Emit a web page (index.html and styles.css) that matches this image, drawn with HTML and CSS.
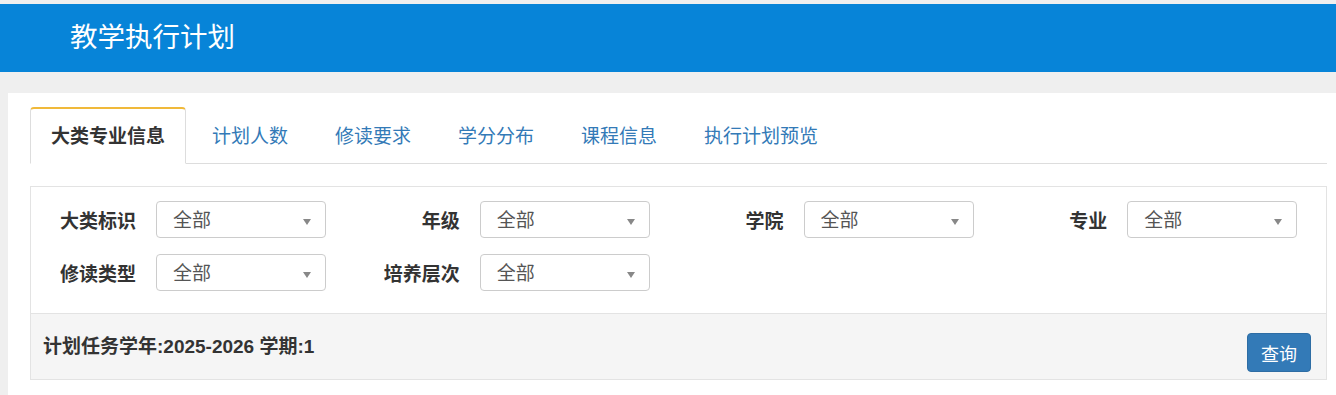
FILE: index.html
```html
<!DOCTYPE html>
<html lang="zh-CN">
<head>
    <meta charset="UTF-8">
    <meta name="viewport" content="width=device-width, initial-scale=1.0">
    <title>教学执行计划</title>
    <link rel="stylesheet" href="styles.css">
</head>
<body>
    <header class="topbar">教学执行计划</header>

    <main class="page">
        <ul class="tabs">
            <li class="tab active">大类专业信息</li>
            <li class="tab">计划人数</li>
            <li class="tab">修读要求</li>
            <li class="tab">学分分布</li>
            <li class="tab">课程信息</li>
            <li class="tab">执行计划预览</li>
        </ul>

        <section class="panel">
            <div class="filters">
                <div class="field">
                    <label>大类标识</label>
                    <div class="select"><span>全部</span><i class="caret"></i></div>
                </div>
                <div class="field">
                    <label>年级</label>
                    <div class="select"><span>全部</span><i class="caret"></i></div>
                </div>
                <div class="field">
                    <label>学院</label>
                    <div class="select"><span>全部</span><i class="caret"></i></div>
                </div>
                <div class="field">
                    <label>专业</label>
                    <div class="select"><span>全部</span><i class="caret"></i></div>
                </div>
                <div class="field">
                    <label>修读类型</label>
                    <div class="select"><span>全部</span><i class="caret"></i></div>
                </div>
                <div class="field">
                    <label>培养层次</label>
                    <div class="select"><span>全部</span><i class="caret"></i></div>
                </div>
            </div>
            <div class="panel-footer">
                <span class="term">计划任务学年:2025-2026 学期:1</span>
                <button class="btn">查询</button>
            </div>
        </section>
    </main>
</body>
</html>
```

FILE: styles.css
```css
/* Base */
* {
    margin: 0;
    padding: 0;
    box-sizing: border-box;
}

body {
    font-family: "Liberation Sans", "Noto Sans CJK SC", sans-serif;
    background: #efefef;
    color: #333;
    height: 395px;
    overflow: hidden;
}

/* Header bar */
.topbar {
    margin-top: 4px;
    height: 68px;
    line-height: 68px;
    padding-left: 70px;
    background: #0784d8;
    color: #fff;
    font-size: 27.5px;
}

/* Page body */
.page {
    margin: 21px 0 0 8px;
    padding: 14px 9px 0 22px;
    background: #fff;
    height: 310px;
}

/* Tabs */
.tabs {
    display: flex;
    list-style: none;
    border-bottom: 1px solid #ddd;
}

.tab {
    padding: 0 20px;
    margin-right: 5px;
    height: 57px;
    line-height: 58px;
    font-size: 19px;
    color: #337ab7;
    border: 1px solid transparent;
    border-radius: 4px 4px 0 0;
    margin-bottom: -1px;
}

.tab.active {
    color: #333;
    font-weight: bold;
    background: #fff;
    border-color: #ddd;
    border-top: 2px solid #f0b93a;
    border-bottom-color: #fff;
    line-height: 56px;
}

/* Filter panel */
.panel {
    margin-top: 22px;
    border: 1px solid #e3e3e3;
}

.filters {
    display: grid;
    grid-template-columns: repeat(4, 1fr);
    row-gap: 16px;
    padding: 14px 0 22px;
}

.field {
    display: flex;
    align-items: center;
}

.field label {
    width: 105px;
    margin-right: 20px;
    text-align: right;
    font-size: 19px;
    font-weight: bold;
    color: #333;
}

.select {
    position: relative;
    width: 170px;
    height: 37px;
    line-height: 38px;
    padding-left: 16px;
    border: 1px solid #ccc;
    border-radius: 4px;
    font-size: 19px;
    color: #555;
}

.caret {
    position: absolute;
    right: 14px;
    top: 17px;
    border-left: 4px solid transparent;
    border-right: 4px solid transparent;
    border-top: 6px solid #888;
}

.panel-footer {
    display: flex;
    justify-content: space-between;
    align-items: center;
    height: 66px;
    padding: 0 15px 4px 12px;
    background: #f5f5f5;
    border-top: 1px solid #e3e3e3;
}

.term {
    font-size: 19px;
    font-weight: bold;
    color: #333;
}

.btn {
    align-self: flex-end;
    margin-bottom: 3px;
    height: 39px;
    padding: 0 13px;
    font-family: inherit;
    font-size: 18px;
    color: #fff;
    background: #337ab7;
    border: 1px solid #2e6da4;
    border-radius: 4px;
}
```
